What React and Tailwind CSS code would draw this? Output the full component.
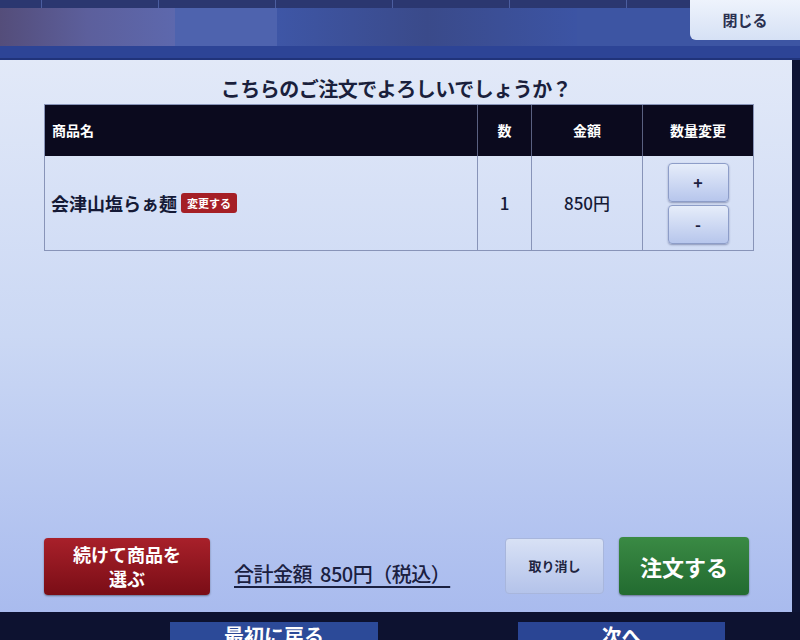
import React from "react";

const jp = { fontFamily: '"Noto Sans CJK JP", "Noto Sans", sans-serif' };

function QtyButton({ label }) {
  return (
    <button className="w-[61px] h-[39px] rounded-[4px] border border-[#8d9dc8] bg-gradient-to-b from-[#e6edfa] to-[#b7c6ec] shadow-[0_1px_2px_rgba(30,40,90,0.4)] text-[#1c2140] text-[16px] font-bold leading-none flex items-center justify-center">
      {label}
    </button>
  );
}

export default function App() {
  return (
    <div className="w-[800px] h-[640px] overflow-hidden relative bg-[#0e1434] flex flex-col" style={jp}>
      {/* menu behind the modal */}
      <div className="h-[60px] flex flex-col bg-[#2a3d86]">
        <div className="h-[8px] flex bg-[#2b3770]">
          <div className="w-[42px] border-r border-[#4c5ea0]" />
          <div className="w-[117px] border-r border-[#4c5ea0]" />
          <div className="w-[117px] border-r border-[#4c5ea0]" />
          <div className="w-[117px] border-r border-[#4c5ea0]" />
          <div className="w-[117px] border-r border-[#4c5ea0]" />
          <div className="w-[117px] border-r border-[#4c5ea0]" />
          <div className="flex-1" />
        </div>
        <div className="h-[38px] flex">
          <div className="w-[175px] bg-gradient-to-r from-[#544d7a] via-[#5c5f9c] to-[#5d68ad]" />
          <div className="w-[102px] bg-[#4e63ae]" />
          <div className="w-[300px] bg-gradient-to-r from-[#3e56a6] via-[#3a4a8a] to-[#3c54a4]" />
          <div className="flex-1 bg-[#3d55a3]" />
        </div>
        <div className="flex-1 bg-[#2d4496] border-b-2 border-[#20337a]" />
      </div>

      <div className="absolute top-0 right-0 w-[110px] h-[40px] rounded-bl-[6px] bg-gradient-to-b from-[#eef3fc] to-[#d6e1f5] flex items-center justify-center text-[15px] font-bold text-[#2a3050]">
        閉じる
      </div>

      {/* modal */}
      <div className="flex-1 mr-[8px] bg-gradient-to-b from-[#e2e9f8] via-[#cbd8f4] to-[#a9bbee] flex flex-col">
        <h1 className="pt-[15px] h-[44px] text-center text-[20px] leading-[28px] font-bold text-[#1a1f3c] tracking-[-0.5px]">
          こちらのご注文でよろしいでしょうか？
        </h1>

        <div className="ml-[44px] w-[710px] border border-[#8894b8]">
          <div className="flex h-[51px] bg-[#0b0a1e] text-white text-[14px] font-bold">
            <div className="w-[433px] pl-[7px] pt-[15px] border-r border-[#5a6080]">商品名</div>
            <div className="w-[54px] flex items-center justify-center border-r border-[#5a6080]">数</div>
            <div className="w-[111px] flex items-center justify-center border-r border-[#5a6080]">金額</div>
            <div className="flex-1 flex items-center justify-center">数量変更</div>
          </div>
          <div className="flex h-[94px] text-[#151a36]">
            <div className="w-[433px] flex items-center pl-[6px] gap-[4px] border-r border-[#8894b8]">
              <span className="text-[18px] font-bold">会津山塩らぁ麺</span>
              <span className="px-[6px] h-[20px] rounded-[3px] bg-[#a51f26] text-white text-[11px] font-bold flex items-center">変更する</span>
            </div>
            <div className="w-[54px] flex items-center justify-center text-[17px] font-medium border-r border-[#8894b8]">1</div>
            <div className="w-[111px] flex items-center justify-center text-[17px] font-medium border-r border-[#8894b8]">850円</div>
            <div className="flex-1 flex flex-col items-center justify-center gap-[3px]">
              <QtyButton label="+" />
              <QtyButton label="-" />
            </div>
          </div>
        </div>

        <div className="flex-1" />

        <div className="flex items-center h-[60px] mb-[16px]">
          <button className="ml-[44px] w-[166px] h-[57px] rounded-[4px] bg-gradient-to-b from-[#a8202a] to-[#7a0d16] text-white text-[18px] font-bold leading-[24px] shadow-[0_1px_2px_rgba(0,0,0,0.4)]">
            続けて商品を<br />選ぶ
          </button>
          <div className="ml-[24px] mt-[16px] text-[20px] font-medium text-[#1a2040] underline underline-offset-[4px] decoration-[1.5px] tracking-[-0.5px]">
            合計金額&nbsp;&nbsp;850円（税込）
          </div>
          <div className="flex-1" />
          <button className="w-[99px] h-[56px] rounded-[4px] border border-[#a8b6dc] bg-gradient-to-b from-[#d8e1f5] to-[#b4c3ea] text-[13px] font-bold text-[#20243e]">
            取り消し
          </button>
          <button className="ml-[15px] mr-[43px] w-[130px] h-[58px] rounded-[4px] bg-gradient-to-b from-[#3a8a44] to-[#226b30] text-white text-[22px] font-bold shadow-[0_1px_2px_rgba(0,0,0,0.4)]">
            注文する
          </button>
        </div>
      </div>

      {/* bottom nav behind modal */}
      <div className="h-[28px] flex items-start pt-[10px] bg-[#0d1230]">
        <div className="ml-[170px] w-[208px] h-[18px] bg-[#2c4a98] overflow-hidden flex justify-center">
          <span className="text-white text-[20px] font-bold leading-[28px]">最初に戻る</span>
        </div>
        <div className="ml-[140px] w-[207px] h-[18px] bg-[#2a4594] overflow-hidden flex justify-center">
          <span className="text-white text-[20px] font-bold leading-[28px]">次へ</span>
        </div>
      </div>
    </div>
  );
}
